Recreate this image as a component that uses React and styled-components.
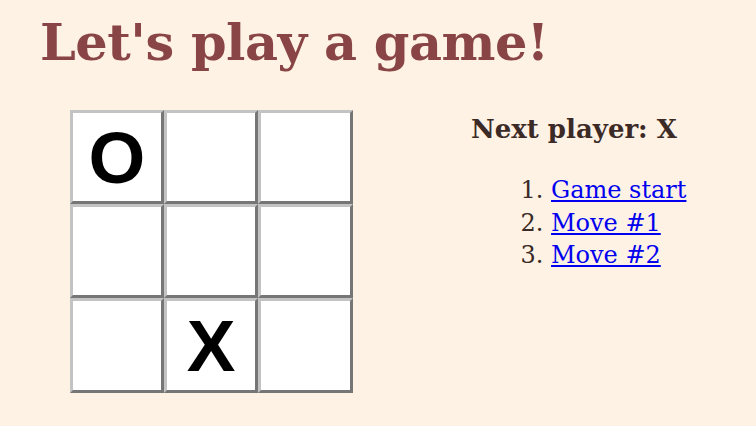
import styled, { createGlobalStyle } from "styled-components"

const GlobalStyle = createGlobalStyle`
html, body {
margin: 0;
padding: 0;
background: #fef2e5;
}
body {
font-family: "DejaVu Serif", "Liberation Serif", serif;
}
`;

const squares = ["O", null, null, null, null, null, null, "X", null];
const moves = ["Game start", "Move #1", "Move #2"];

const Square = ({ value }) => <Cell>{value}</Cell>;

const App = () => {
    return (
        <>
            <GlobalStyle />
            <Page>
                <Title>Let's play a game!</Title>
                <Game>
                    <Board>
                        {squares.map((v, i) => (
                            <Square key={i} value={v} />
                        ))}
                    </Board>
                    <Info>
                        <Status>Next player: X</Status>
                        <MoveList>
                            {moves.map((m) => (
                                <li key={m}>
                                    <a href="#">{m}</a>
                                </li>
                            ))}
                        </MoveList>
                    </Info>
                </Game>
            </Page>
        </>
    )
}

const Page = styled.div`
padding: 0 40px;
`;

const Title = styled.h1`
margin: 0;
padding-top: 12px;
font-size: 51px;
line-height: 60px;
font-weight: bold;
color: #894545;
letter-spacing: -0.5px;
`;

const Game = styled.div`
display: flex;
align-items: flex-start;
margin-top: 38px;
padding-left: 30px;
`;

const Board = styled.div`
display: grid;
grid-template-columns: 94px 94px 95px;
grid-template-rows: 94px 94px 95px;
`;

const Cell = styled.div`
box-sizing: border-box;
background: #fff;
border: 3px solid;
border-color: #c3c3c3 #767676 #767676 #c3c3c3;
display: flex;
align-items: center;
justify-content: center;
font-family: "Liberation Sans", Arial, sans-serif;
font-weight: bold;
font-size: 73px;
line-height: 1;
color: #000;
`;

const Info = styled.div`
margin-left: 118px;
color: #3b2a25;
`;

const Status = styled.div`
font-weight: bold;
font-size: 26px;
line-height: 32px;
margin-top: 3px;
`;

const MoveList = styled.ol`
margin: 29px 0 0;
padding-left: 80px;
font-size: 24px;
line-height: 32.5px;

a {
color: #0000ee;
}
`;

export default App;
